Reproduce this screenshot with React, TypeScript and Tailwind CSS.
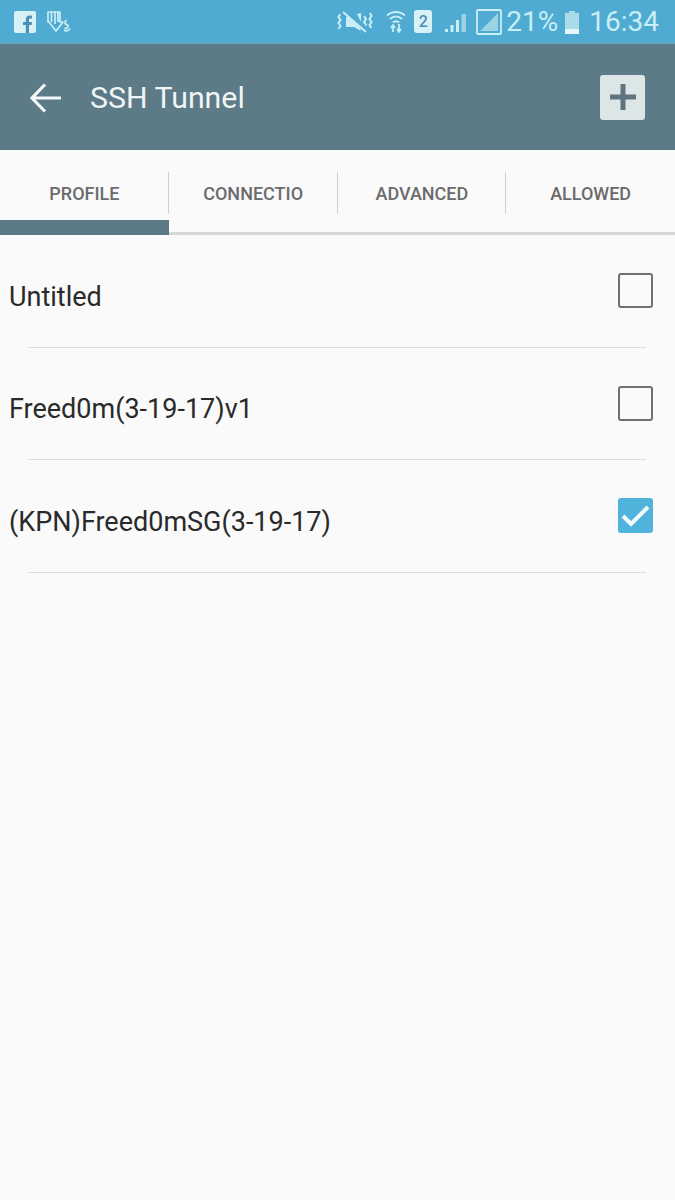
const TABS = ['PROFILE', 'CONNECTIO', 'ADVANCED', 'ALLOWED']

const PROFILES = [
  { name: 'Untitled', checked: false },
  { name: 'Freed0m(3-19-17)v1', checked: false },
  { name: '(KPN)Freed0mSG(3-19-17)', checked: true },
]

function StatusBar() {
  return (
    <div className="flex h-[44px] items-center justify-between border-b-2 border-[#5aa5c2] bg-[#4fabd1] pl-[14px] pr-[16px] pt-[1px] text-[#c9eef5]">
      <div className="flex items-center gap-[10px]">
        {/* facebook */}
        <svg width="22" height="22" viewBox="0 0 22 22">
          <rect width="22" height="22" rx="2" fill="#d8f1f7" />
          <path d="M15 22v-8h2.600l.4-3h-3V9c0-1 .4-1.500 1.500-1.500H18V4.700C17.500 4.600 16.600 4.500 15.600 4.500 13.300 4.500 11.800 5.900 11.800 8.500V11H9v3h2.800v8z" fill="#4a8fb5" />
        </svg>
        {/* download with squiggle */}
        <svg width="25" height="24" viewBox="0 0 25 24" fill="none" stroke="#c9eef5" strokeWidth="1.700" strokeLinejoin="round">
          <path d="M2 2h12v10h3l-7 9-7-9h-1z" />
          <path d="M5.500 2v10M9 2v12M12 2v10" />
          <path d="M21 10.500a2 2 0 1 0 0 4 2 2 0 1 1-2.500 3.500" />
          <path d="M18 20a4 4 0 0 0 6-1.500" />
        </svg>
      </div>
      <div className="flex items-center">
        {/* vibrate with slash */}
        <svg width="36" height="24" viewBox="0 0 36 24" fill="none" stroke="#c9eef5" strokeWidth="2" className="mr-[13px]">
          <path d="M9 7l3-1 10 10 2 5-7-4H9z" fill="#c9eef5" stroke="none" />
          <path d="M20 4l4-1v9z" fill="#c9eef5" stroke="none" />
          <path d="M3 4l-1.500 3 2 3-2 3 2 3-2 3M33 3l1.500 3-2 3 2 3-2 3 2 3M27 6l2 3-2 3 2 3-2 3" />
          <path d="M6 3l24 19" stroke="#4fabd1" strokeWidth="3.500" transform="translate(1.500 -2)" />
          <path d="M6 2l23 20" />
        </svg>
        {/* wifi with up and down arrows */}
        <svg width="20" height="24" viewBox="0 0 20 24" fill="none" stroke="#c9eef5" strokeWidth="2" className="mr-[8px]">
          <path d="M1 5.500a13 13 0 0 1 18 0M4 9a8.500 8.500 0 0 1 12 0M7 12.500a4 4 0 0 1 6 0" />
          <path d="M7 22v-5.500M5 18l2-3 2 3M13 14v6M11 19l2 3 2-3" strokeWidth="1.800" />
        </svg>
        {/* sim 2 */}
        <div className="mr-[12px] flex h-[23px] w-[18px] items-center justify-center rounded-[3px] bg-[#d8f1f7] font-['Roboto',sans-serif] text-[16px] font-medium leading-none text-[#4a8fb5]">
          2
        </div>
        {/* signal */}
        <svg width="24" height="22" viewBox="0 0 24 22" className="mr-[8px]">
          <path d="M1 18h3v3H1zM6.500 14h3v7h-3zM12 9h3v12h-3z" fill="#c9eef5" />
          <path d="M17.500 3H22v18h-4.500z" fill="#9ad4e4" />
        </svg>
        {/* data box */}
        <svg width="26" height="26" viewBox="0 0 26 26" className="mr-[4px]">
          <rect x="1" y="1" width="24" height="24" rx="1" fill="none" stroke="#c9eef5" strokeWidth="1.800" />
          <path d="M4 22L22 4v18z" fill="#9ad4e4" />
        </svg>
        <span className="mr-[6px] font-['Roboto',sans-serif] text-[28px] leading-none text-[#c9eef5]">21%</span>
        {/* battery */}
        <svg width="16" height="24" viewBox="0 0 16 24" className="mr-[9px]">
          <path d="M5 1h6v2h4v21H1V3h4z" fill="#a9dbe8" />
          <rect x="1" y="19" width="14" height="5" fill="#e4f7fa" />
        </svg>
        <span className="font-['Roboto',sans-serif] text-[28px] leading-none text-[#c9eef5]">16:34</span>
      </div>
    </div>
  )
}

function Toolbar() {
  return (
    <div className="flex h-[106px] items-center bg-[#5d7a87] pl-[30px] pr-[30px]">
      <svg width="31" height="30" viewBox="0 0 31 30" fill="none" stroke="#f4f8f8" strokeWidth="3.200" className="mt-[1px]">
        <path d="M31 15H3M15 1.500L2 15l13 13.500" />
      </svg>
      <div className="ml-[29px] mt-[3px] flex-1 font-['Roboto',sans-serif] text-[30.300px] leading-none text-[#f0f5f5]">SSH Tunnel</div>
      <div className="flex h-[45px] w-[45px] items-center justify-center rounded-[3px] bg-[#dde6e7]">
        <svg width="26" height="26" viewBox="0 0 26 26" fill="#5f747e">
          <path d="M10.500 0h5v10.500H26v5H15.500V26h-5V15.500H0v-5h10.500z" />
        </svg>
      </div>
    </div>
  )
}

function Tabs() {
  return (
    <div className="relative flex h-[85px] border-b-[3px] border-[#d6d8d8] bg-[#fafafa]">
      {TABS.map((tab, i) => (
        <div key={tab} className="relative flex flex-1 items-center justify-center pt-[5px]">
          <div className="font-['Roboto',sans-serif] text-[18px] font-medium leading-none text-[#6b6b6b]">{tab}</div>
          {i < 3 && <div className="absolute right-0 top-[22px] h-[42px] w-px bg-[#cfcfcf]" />}
          {i === 0 && <div className="absolute bottom-[-3px] left-0 right-0 h-[15px] bg-[#5d7a87]" />}
        </div>
      ))}
    </div>
  )
}

export default function App() {
  return (
    <div className="flex h-[1200px] w-[675px] flex-col bg-[#fafafa]">
      <StatusBar />
      <Toolbar />
      <Tabs />
      <div>
        {PROFILES.map(p => (
          <div key={p.name} className="relative flex h-[112.500px] items-center justify-between pb-[2px] pl-[9px] pr-[22px]">
            <span className="mt-[14px] font-['Roboto',sans-serif] text-[27px] leading-none text-[#2a2a2a]">{p.name}</span>
            <div className="mt-[1px]">
              {p.checked ? (
                <div className="flex h-[35px] w-[35px] items-center justify-center rounded-[3px] bg-[#4fb3dc]">
                  <svg width="29" height="24" viewBox="0 0 29 24" fill="none" stroke="#f2f9fb" strokeWidth="4">
                    <path d="M2 12l8 8L27 3" />
                  </svg>
                </div>
              ) : (
                <div className="h-[35px] w-[35px] rounded-[3px] border-2 border-[#707070]" />
              )}
            </div>
            <div className="absolute bottom-0 left-[28px] right-[29px] h-px bg-[#dcdcdc]" />
          </div>
        ))}
      </div>
    </div>
  )
}
